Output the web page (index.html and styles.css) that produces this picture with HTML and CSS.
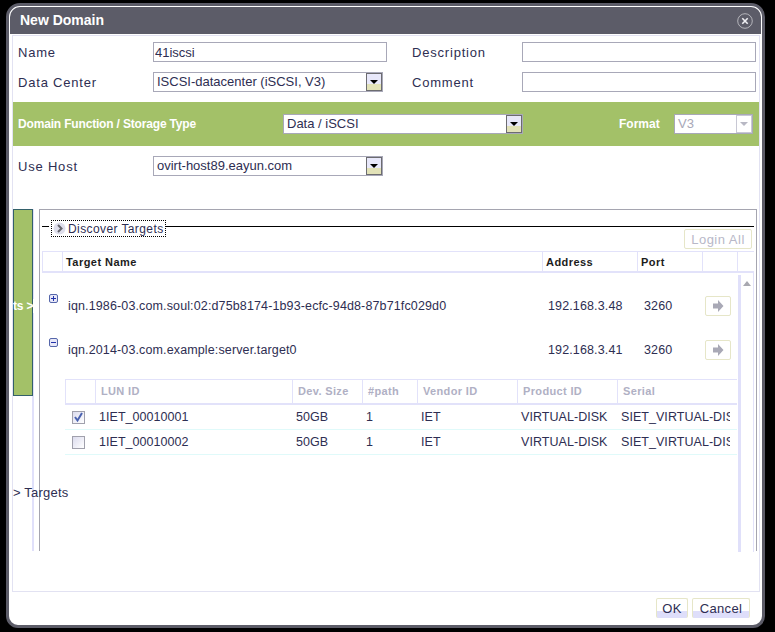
FILE: index.html
```html
<!DOCTYPE html>
<html lang="en">
    <head>
        <meta charset="UTF-8">
        <title>New Domain</title>
        <link rel="stylesheet" href="styles.css">
    </head>
    <body>
        <div class="dialog">
            <div class="title">
                <span>New Domain</span>
                <svg class="close" width="16" height="16" viewBox="0 0 16 16">
                    <circle cx="8" cy="8" r="7.3" fill="none" stroke="#b4b4ba" stroke-width="1"/>
                    <path d="M5.3 5.3 10.7 10.7M10.7 5.3 5.3 10.7" stroke="#f0f0f4" stroke-width="1.6"/>
                </svg>
            </div>
            <div class="content">
                <div class="form-row">
                    <label class="label">Name</label>
                    <input class="field" type="text" value="41iscsi">
                    <label class="label label-right">Description</label>
                    <input class="field" type="text">
                </div>
                <div class="form-row">
                    <label class="label">Data Center</label>
                    <div class="combo combo-wide">
                        <span class="combo-text">ISCSI-datacenter (iSCSI, V3)</span>
                        <span class="combo-btn"></span>
                    </div>
                    <label class="label label-right">Comment</label>
                    <input class="field" type="text">
                </div>
                <div class="band">
                    <span class="band-label band-type">Domain Function / Storage Type</span>
                    <div class="combo combo-type">
                        <span class="combo-text">Data / iSCSI</span>
                        <span class="combo-btn"></span>
                    </div>
                    <span class="band-label band-format">Format</span>
                    <div class="combo combo-format">
                        <span class="combo-text">V3</span>
                        <span class="combo-btn combo-btn-off"></span>
                    </div>
                </div>
                <div class="form-row host-row">
                    <label class="label">Use Host</label>
                    <div class="combo combo-wide">
                        <span class="combo-text">ovirt-host89.eayun.com</span>
                        <span class="combo-btn"></span>
                    </div>
                </div>
                <div class="storage">
                    <div class="side">
                        <div class="side-tab"></div>
                    </div>
                    <div class="frame">
                        <div class="legend-row">
                            <span class="legend-line legend-line-short"></span>
                            <span class="legend">
                                <svg width="13" height="13" viewBox="0 0 13 13">
                                    <circle cx="6.5" cy="6.5" r="6" fill="#dedeec"/>
                                    <path d="M5 3 8.5 6.5 5 10" fill="none" stroke="#66666e" stroke-width="2"/>
                                </svg>
                                Discover Targets
                            </span>
                            <span class="legend-line"></span>
                        </div>
                        <div class="login-bar">
                            <span class="btn login-all">Login All</span>
                        </div>
                        <div class="targets-head">
                            <span></span>
                            <span>Target Name</span>
                            <span>Address</span>
                            <span>Port</span>
                            <span></span>
                            <span></span>
                        </div>
                        <div class="scroll">
                            <div class="list">
                                <div class="target">
                                    <span class="tree tree-plus"></span>
                                    <span>iqn.1986-03.com.soul:02:d75b8174-1b93-ecfc-94d8-87b71fc029d0</span>
                                    <span>192.168.3.48</span>
                                    <span>3260</span>
                                    <span class="btn go">
                                        <svg width="11" height="12" viewBox="0 0 11 12"><path d="M0 3.5H5V0L10.5 6 5 12V8.5H0Z" fill="#a9a9b6"/></svg>
                                    </span>
                                </div>
                                <div class="target">
                                    <span class="tree tree-minus"></span>
                                    <span>iqn.2014-03.com.example:server.target0</span>
                                    <span>192.168.3.41</span>
                                    <span>3260</span>
                                    <span class="btn go">
                                        <svg width="11" height="12" viewBox="0 0 11 12"><path d="M0 3.5H5V0L10.5 6 5 12V8.5H0Z" fill="#a9a9b6"/></svg>
                                    </span>
                                </div>
                                <div class="luns">
                                    <div class="lun lun-head">
                                        <span></span>
                                        <span>LUN ID</span>
                                        <span>Dev. Size</span>
                                        <span>#path</span>
                                        <span>Vendor ID</span>
                                        <span>Product ID</span>
                                        <span>Serial</span>
                                    </div>
                                    <div class="lun">
                                        <span class="check check-on">
                                            <svg width="11" height="11" viewBox="0 0 11 11"><path d="M2 5 4.5 8.5 9 1" fill="none" stroke="#4a62b0" stroke-width="2"/></svg>
                                        </span>
                                        <span>1IET_00010001</span>
                                        <span>50GB</span>
                                        <span>1</span>
                                        <span>IET</span>
                                        <span>VIRTUAL-DISK</span>
                                        <span class="clip">SIET_VIRTUAL-DISK</span>
                                    </div>
                                    <div class="lun">
                                        <span class="check"></span>
                                        <span>1IET_00010002</span>
                                        <span>50GB</span>
                                        <span>1</span>
                                        <span>IET</span>
                                        <span>VIRTUAL-DISK</span>
                                        <span class="clip">SIET_VIRTUAL-DISK</span>
                                    </div>
                                </div>
                            </div>
                            <div class="scrollbar"></div>
                            <div class="scroll-up"></div>
                        </div>
                    </div>
                    <span class="side-label">ts &gt;</span>
                    <span class="next-label">&gt; Targets</span>
                </div>
            </div>
            <div class="footer">
                <span class="btn btn-foot btn-ok">OK</span>
                <span class="btn btn-foot btn-cancel">Cancel</span>
            </div>
        </div>
    </body>
</html>
```

FILE: styles.css
```css
html, body {
    margin: 0;
    padding: 0;
    height: 632px;
    overflow: hidden;
    background-color: #000;
}

body {
    padding: 3px 10px 4px 6px;
    box-sizing: border-box;
    font-family: "Liberation Sans", Arial, sans-serif;
    font-size: 12px;
    color: #222;
}

.dialog {
    display: flex;
    flex-direction: column;
    box-sizing: border-box;
    height: 625px;
    border: 3px solid #5c5c68;
    border-radius: 14px 14px 12px 12px;
    background-color: #fff;
    overflow: hidden;
}

.title {
    display: flex;
    align-items: center;
    justify-content: space-between;
    flex: none;
    box-sizing: border-box;
    height: 27px;
    margin: 1px 1px 0;
    padding: 0 8px 1px 10px;
    border-radius: 10px 10px 0 0;
    background-color: #5c5c68;
    color: #fff;
    font-size: 14px;
    font-weight: bold;
}

.close {
    margin-top: 2px;
}

.content {
    position: relative;
    flex: none;
    box-sizing: border-box;
    width: 748px;
    height: 557px;
    margin: 1px 0 0 3px;
    border: 1px solid #e2e2f2;
    background-color: #fff;
}

.form-row {
    display: flex;
    align-items: center;
    height: 20px;
    margin-top: 10px;
}

.form-row:first-child {
    margin-top: 6px;
}

.label {
    flex: none;
    width: 135px;
    margin-left: 5px;
    font-size: 13px;
    letter-spacing: 0.8px;
    color: #2e2e52;
}

.label-right {
    width: 110px;
    margin-left: 25px;
}

.field {
    flex: none;
    box-sizing: border-box;
    width: 234px;
    height: 20px;
    margin: 0;
    padding: 0 1px;
    border: 1px solid #a8a8b8;
    outline: none;
    font-family: "Liberation Sans", Arial, sans-serif;
    font-size: 13px;
    color: #2e2e52;
}

.combo {
    display: flex;
    flex: none;
    box-sizing: border-box;
    height: 20px;
    border: 1px solid #a8a8b8;
    background-color: #fff;
}

.combo-wide {
    width: 230px;
    margin-right: 4px;
}

.combo-type {
    width: 240px;
}

.combo-format {
    width: 79px;
}

.combo-text {
    flex: 1;
    padding-left: 3px;
    font-size: 13px;
    line-height: 18px;
    color: #2e2e52;
}

.combo-format .combo-text {
    color: #a8a8b8;
}

.combo-btn {
    position: relative;
    flex: none;
    box-sizing: border-box;
    width: 16px;
    border: 1px solid #6c6c70;
    background: linear-gradient(#e8e8fa 60%, #e2e2b8 60%);
}

.combo-btn::after {
    content: "";
    position: absolute;
    left: 3px;
    top: 6px;
    border-top: 4px solid #000;
    border-left: 4px solid transparent;
    border-right: 4px solid transparent;
}

.combo-btn-off {
    border-color: #c8c8d4;
    background: #fff;
}

.combo-btn-off::after {
    border-top-color: #b8b8c4;
}

.band {
    display: flex;
    align-items: center;
    height: 44px;
    margin-top: 10px;
    background-color: #a3c168;
}

.band-label {
    flex: none;
    margin-left: 5px;
    color: #fff;
    font-size: 12px;
    font-weight: bold;
}

.band-type {
    width: 265px;
    letter-spacing: -0.17px;
}

.band-format {
    width: 55px;
    margin-left: 96px;
}

.host-row {
    margin-top: 10px;
}

.storage {
    display: flex;
    height: 342px;
    margin-top: 33px;
}

.side {
    flex: none;
    box-sizing: border-box;
    width: 21px;
    border-right: 2px solid #e0e0fa;
}

.side-tab {
    box-sizing: border-box;
    width: 20px;
    height: 187px;
    border: 1px solid #33606a;
    background-color: #a3c168;
}

.frame {
    flex: none;
    box-sizing: border-box;
    width: 718px;
    margin-left: 5px;
    padding: 0 2px;
    border: 1px solid #a5a5b0;
    border-bottom: 0;
}

.legend-row {
    display: flex;
    height: 19px;
}

.legend-line {
    flex: 1;
    height: 1px;
    margin-top: 16px;
    background-color: #000;
}

.legend-line-short {
    flex: none;
    width: 7px;
    margin-right: 2px;
}

.legend {
    display: flex;
    align-items: center;
    gap: 2px;
    box-sizing: border-box;
    height: 17px;
    margin-top: 10px;
    padding: 0 1px;
    border: 1px dotted #000;
    font-size: 12px;
    letter-spacing: 0.4px;
    color: #2e2e52;
}

.login-bar {
    display: flex;
    justify-content: flex-end;
    height: 22px;
}

.btn {
    display: flex;
    align-items: center;
    justify-content: center;
    box-sizing: border-box;
    border: 1px solid #e6e6c8;
    border-radius: 2px;
    background-color: #fff;
}

.login-all {
    width: 68px;
    height: 20px;
    margin-right: 2px;
    font-size: 13px;
    letter-spacing: 0.5px;
    color: #b8b8c8;
}

.targets-head {
    display: grid;
    grid-template-columns: 20px 480px 95px 65px 35px 16px;
    box-sizing: border-box;
    height: 22px;
    border: solid #e2e2fa;
    border-width: 1px 0 2px;
    font-size: 11px;
    font-weight: bold;
    letter-spacing: 0.45px;
    line-height: 21px;
    color: #1c1c1c;
}

.targets-head span {
    box-sizing: border-box;
    padding-left: 3px;
    border-left: 1px solid #e2e2fa;
}

.scroll {
    display: flex;
    position: relative;
    box-sizing: border-box;
    width: 712px;
    height: 279px;
    border-right: 1px solid #e2e2fa;
}

.list {
    flex: none;
    width: 695px;
    padding-top: 11px;
}

.target {
    display: grid;
    grid-template-columns: 26px 480px 96px 61px 26px;
    align-items: center;
    height: 44px;
    font-size: 12.5px;
    letter-spacing: 0.13px;
    color: #2e2e52;
}

.tree {
    position: relative;
    box-sizing: border-box;
    width: 9px;
    height: 9px;
    margin: -16px 0 0 7px;
    border: 1px solid #5566aa;
    border-radius: 2px;
    background-color: #e8e8f8;
}

.tree::before {
    content: "";
    position: absolute;
    left: 1px;
    top: 3px;
    width: 5px;
    height: 1px;
    background-color: #2233aa;
}

.tree-plus::after {
    content: "";
    position: absolute;
    left: 3px;
    top: 1px;
    width: 1px;
    height: 5px;
    background-color: #2233aa;
}

.go {
    height: 20px;
}

.luns {
    margin: 7px 0 0 23px;
}

.lun {
    display: grid;
    grid-template-columns: 30px 197px 70px 55px 100px 100px 120px;
    align-items: center;
    box-sizing: border-box;
    height: 25px;
    border-bottom: 1px solid #e0fafa;
    font-size: 12.5px;
    letter-spacing: 0.05px;
    color: #2e2e52;
}

.lun span {
    padding-left: 4px;
}

.lun-head {
    height: 26px;
    border-top: 1px solid #e2e2fa;
    border-bottom: 2px solid #e2e2fa;
    align-items: stretch;
    font-size: 11px;
    font-weight: bold;
    letter-spacing: 0.35px;
    line-height: 23px;
    color: #b0b0c4;
}

.lun-head span {
    padding-left: 5px;
    border-left: 1px solid #e2e2fa;
}

.lun .check {
    display: block;
    box-sizing: border-box;
    width: 13px;
    height: 13px;
    margin-left: 7px;
    padding: 0;
    border: 1px solid #a0a0ac;
    background: linear-gradient(135deg, #dcdcee, #fff);
}

.check svg {
    display: block;
}

.clip {
    overflow: hidden;
    white-space: nowrap;
    width: 113px;
    box-sizing: border-box;
}

.scrollbar {
    flex: none;
    width: 3px;
    margin: 2px 0 0 1px;
    background-color: #e0e0fa;
}

.scroll-up {
    flex: none;
    width: 0;
    height: 0;
    margin: 8px 0 0 2px;
    border-bottom: 5px solid #a8a8b0;
    border-left: 4px solid transparent;
    border-right: 4px solid transparent;
}

.side-label {
    position: absolute;
    left: 0;
    top: 263px;
    width: 26px;
    height: 14px;
    overflow: hidden;
    background: linear-gradient(to right, transparent 20px, #fff 20px);
    color: #fff;
    font-weight: bold;
    letter-spacing: -0.2px;
    line-height: 14px;
    white-space: nowrap;
}

.next-label {
    position: absolute;
    left: 0;
    top: 450px;
    font-size: 13px;
    letter-spacing: 0.2px;
    color: #2e2e52;
    line-height: 14px;
    white-space: nowrap;
}

.footer {
    display: flex;
    justify-content: flex-end;
    gap: 4px;
    padding: 6px 12px 0 0;
}

.btn-foot {
    height: 20px;
    border-bottom: 0;
    background: linear-gradient(#fff 65%, #dedefa 65%);
    font-size: 13px;
    letter-spacing: 0.3px;
    color: #2e2e52;
}

.btn-ok {
    width: 32px;
}

.btn-cancel {
    width: 58px;
}
```
